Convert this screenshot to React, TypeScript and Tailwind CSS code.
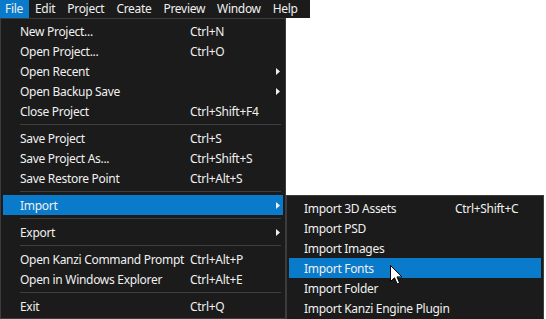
type Item =
  | { sep: true }
  | { label: string; shortcut?: string; sub?: boolean; active?: boolean; sep?: false };

const fileItems: Item[] = [
  { label: "New Project...", shortcut: "Ctrl+N" },
  { label: "Open Project...", shortcut: "Ctrl+O" },
  { label: "Open Recent", sub: true },
  { label: "Open Backup Save", sub: true },
  { label: "Close Project", shortcut: "Ctrl+Shift+F4" },
  { sep: true },
  { label: "Save Project", shortcut: "Ctrl+S" },
  { label: "Save Project As...", shortcut: "Ctrl+Shift+S" },
  { label: "Save Restore Point", shortcut: "Ctrl+Alt+S" },
  { sep: true },
  { label: "Import", sub: true, active: true },
  { sep: true },
  { label: "Export", sub: true },
  { sep: true },
  { label: "Open Kanzi Command Prompt", shortcut: "Ctrl+Alt+P" },
  { label: "Open in Windows Explorer", shortcut: "Ctrl+Alt+E" },
  { sep: true },
  { label: "Exit", shortcut: "Ctrl+Q" },
];

const importItems: Item[] = [
  { label: "Import 3D Assets", shortcut: "Ctrl+Shift+C" },
  { label: "Import PSD" },
  { label: "Import Images" },
  { label: "Import Fonts", active: true },
  { label: "Import Folder" },
  { label: "Import Kanzi Engine Plugin" },
];

const Arrow = () => (
  <svg width="4" height="7" viewBox="0 0 4 7" className="block ml-[1px]">
    <path d="M0 0 L4 3.5 L0 7 Z" fill="#f0f0f0" />
  </svg>
);

const Cursor = () => (
  <svg width="13" height="20" viewBox="0 0 13 20" className="absolute left-[390px] top-[265px]">
    <path
      d="M0.5 0.5 L0.5 16.5 L4.5 12.8 L7.2 19 L9.6 18 L7 11.9 L12 11.9 Z"
      fill="#ffffff"
      stroke="#000000"
      strokeWidth="1"
    />
  </svg>
);

export default function App() {
  const menuBar = ["File", "Edit", "Project", "Create", "Preview", "Window", "Help"];
  return (
    <div
      className="relative w-[546px] h-[319px] overflow-hidden bg-white text-[12px] tracking-[-0.3px] text-[#f0f0f0]"
      style={{ fontFamily: '"Noto Sans", "Open Sans", sans-serif' }}
    >
      <div className="flex h-[18px] w-[310px] bg-[#1b1b1b] leading-[18px]">
        {menuBar.map((m, i) => (
          <div key={m} className={`px-[6px] ${i === 0 ? "bg-[#0a7acb] pl-[5px]" : ""}`}>
            {m}
          </div>
        ))}
      </div>

      <div className="w-[286px] h-[301px] border border-[#3c3c3c] bg-[#1b1b1b] p-[2px] leading-[20px]">
        {fileItems.map((it, i) =>
          it.sep ? (
            <div key={i} className="h-[7px] flex items-center pl-[17px] pr-[2px]">
              <div className="h-px w-full bg-[#3f3f3f]" />
            </div>
          ) : (
            <div
              key={i}
              className={`flex h-[20px] items-center pl-[17px] ${it.active ? "bg-[#0a7acb]" : ""}`}
            >
              <span className="w-[170px] pt-px whitespace-nowrap">{it.label}</span>
              <span className="w-[85px] pt-px whitespace-nowrap">{it.shortcut}</span>
              {it.sub && <Arrow />}
            </div>
          )
        )}
      </div>

      <div className="absolute left-[286px] top-[195px] w-[258px] h-[127px] border border-[#3c3c3c] bg-[#1b1b1b] p-[2px] leading-[20px]">
        {importItems.map((it, i) =>
          it.sep ? null : (
            <div
              key={i}
              className={`flex h-[20px] items-center pl-[15px] ${it.active ? "bg-[#0a7acb]" : ""}`}
            >
              <span className="w-[151px] pt-px whitespace-nowrap">{it.label}</span>
              <span className="pt-px whitespace-nowrap">{it.shortcut}</span>
            </div>
          )
        )}
      </div>

      <Cursor />
    </div>
  );
}
